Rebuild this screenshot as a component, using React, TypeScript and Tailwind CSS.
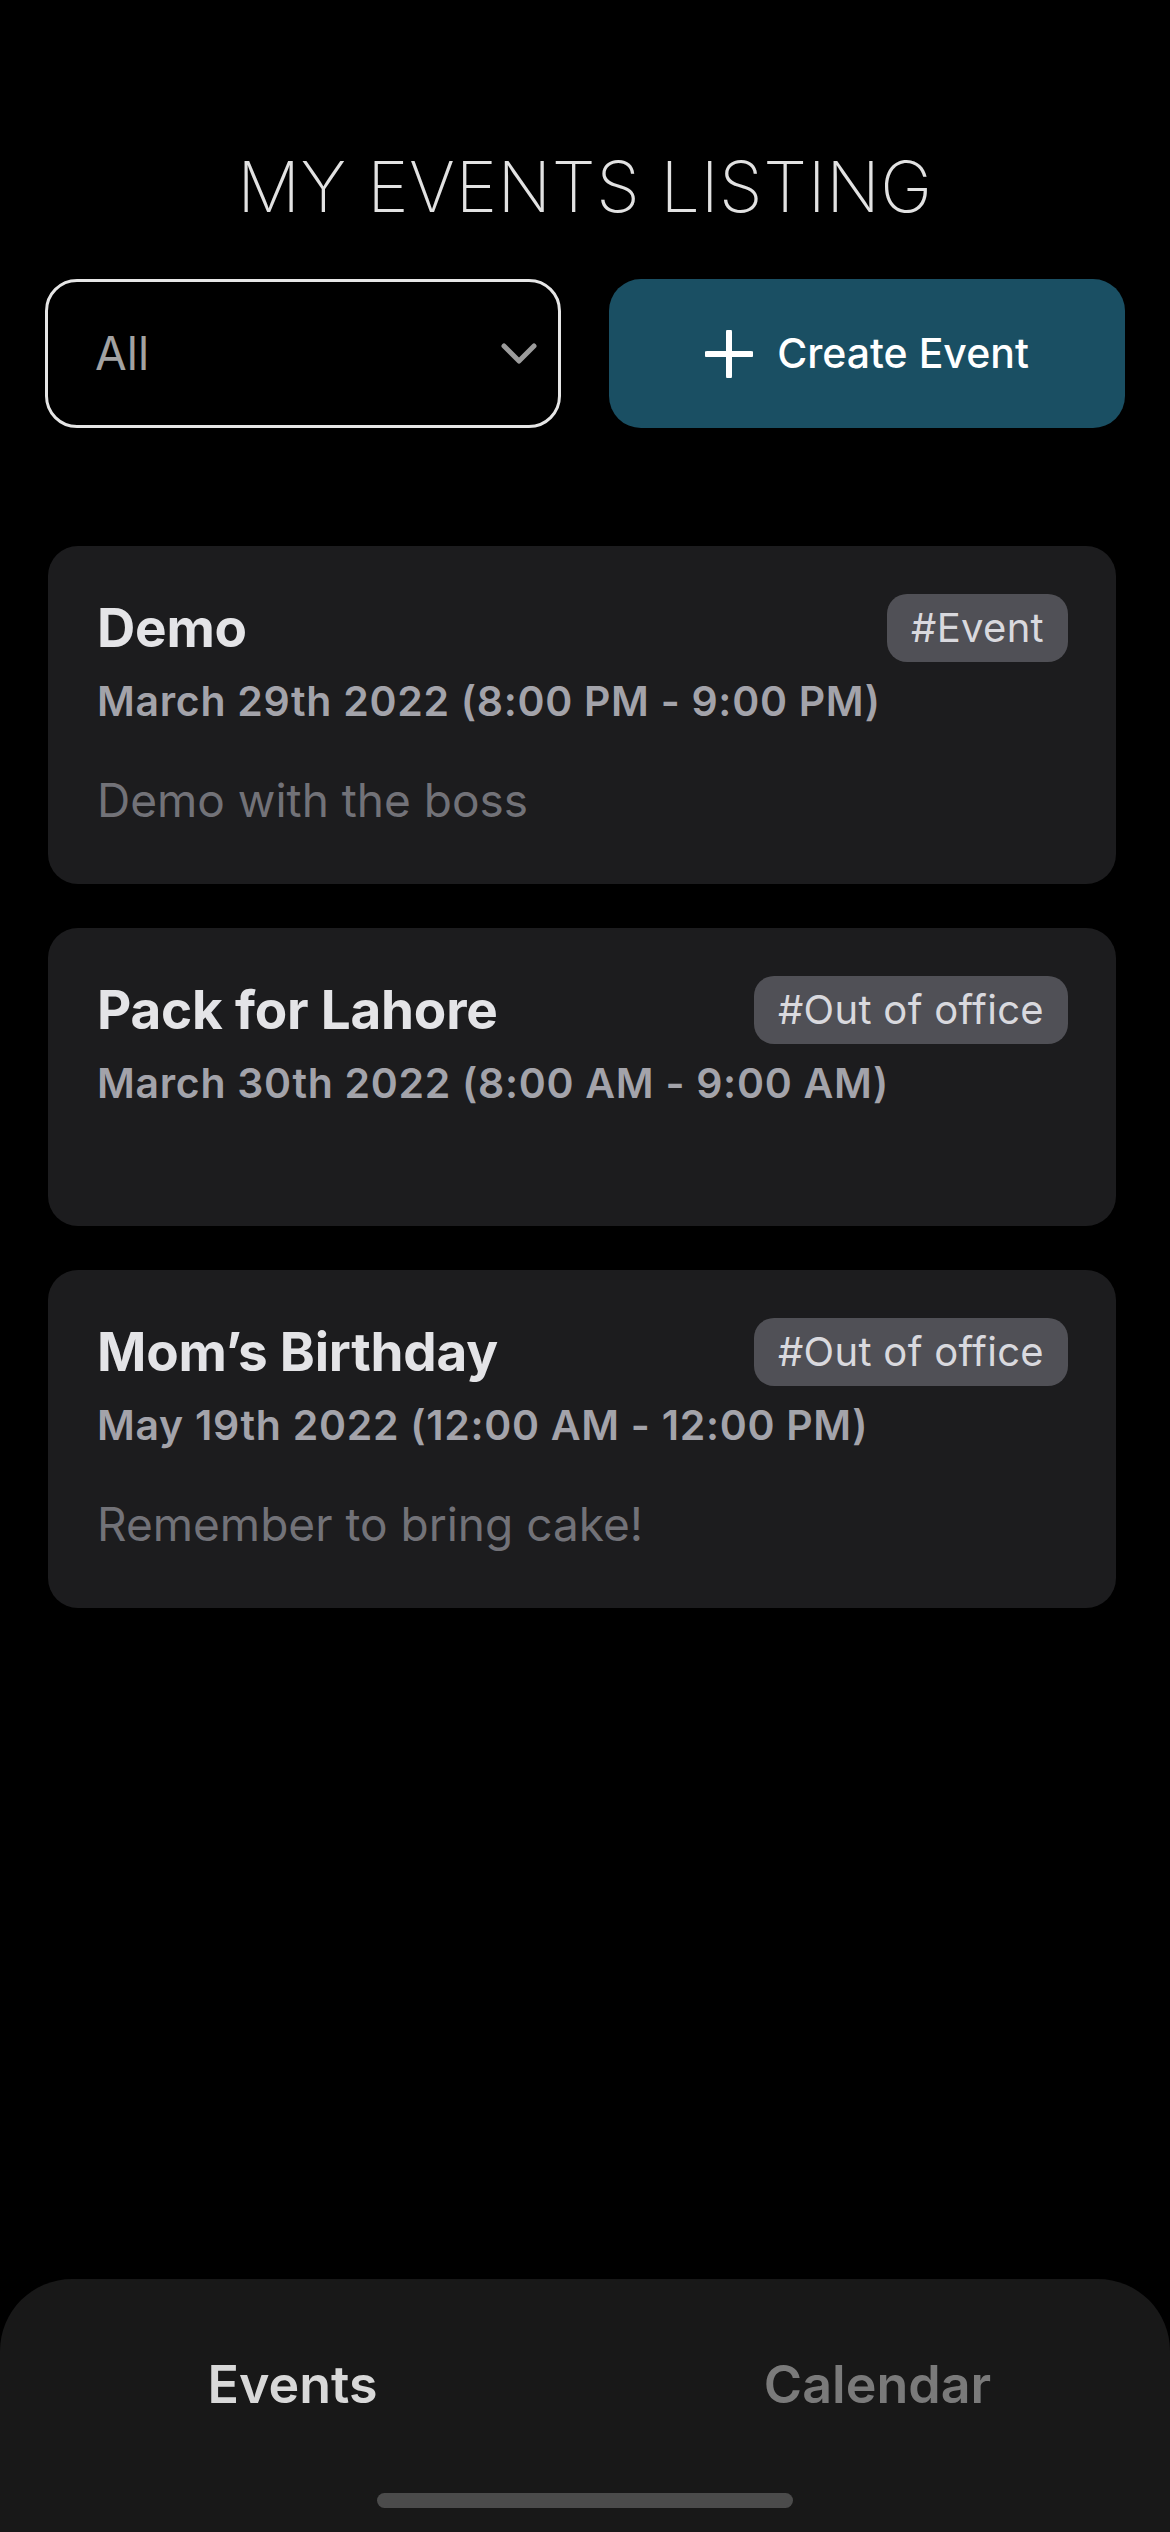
import React from 'react';

interface EventItem {
  title: string;
  date: string;
  tag: string;
  description: string;
}

const events: EventItem[] = [
  { title: 'Demo', date: 'March 29th 2022 (8:00 PM - 9:00 PM)', tag: '#Event', description: 'Demo with the boss' },
  { title: 'Pack for Lahore', date: 'March 30th 2022 (8:00 AM - 9:00 AM)', tag: '#Out of office', description: '' },
  { title: 'Mom’s Birthday', date: 'May 19th 2022 (12:00 AM - 12:00 PM)', tag: '#Out of office', description: 'Remember to bring cake!' },
];

function EventCard({ event }: { event: EventItem }) {
  return (
    <div className="bg-[#1c1c1e] rounded-[30px] pl-[49px] pr-[48px] pt-[48px] pb-[61px]">
      <div className="flex items-center justify-between h-[68px]">
        <h2 className="text-[53px] leading-none font-bold text-[#e4e4e7] tracking-[-0.2px]">{event.title}</h2>
        <span className="h-[68px] flex items-center px-[24px] rounded-[20px] bg-[#505056] text-[40px] leading-none text-[#d9d9de] tracking-[0.3px]">
          {event.tag}
        </span>
      </div>
      <p className="mt-[19px] text-[41px] leading-none font-semibold text-[#a3a3aa] tracking-[0.7px]">{event.date}</p>
      {event.description ? (
        <p className="mt-[55px] text-[46px] leading-none text-[#727278]">{event.description}</p>
      ) : (
        <div className="mt-[56px] h-[5px]" />
      )}
    </div>
  );
}

export default function App() {
  return (
    <div
      className="h-[2532px] bg-black flex flex-col overflow-hidden"
      style={{ fontFamily: 'Inter, "Noto Sans", sans-serif' }}
    >
      <h1 className="pt-[152px] text-center text-[70px] leading-none font-extralight text-[#e2e2e2] tracking-[0.6px]">
        MY EVENTS LISTING
      </h1>

      <div className="mt-[57px] px-[45px] grid grid-cols-2 gap-[48px]">
        <button className="h-[149px] rounded-[32px] border-[3px] border-[#e6e6e6] flex items-center justify-between pl-[47px] pr-[20px]">
          <span className="text-[46px] text-[#a2a2a2]">All</span>
          <svg width="38" height="26" viewBox="0 0 38 26" fill="none">
            <path d="M4 5 L19 20 L34 5" stroke="#9c9c9c" strokeWidth="5" strokeLinecap="round" strokeLinejoin="round" />
          </svg>
        </button>
        <button className="h-[149px] rounded-[32px] bg-[#1a4f63] flex items-center justify-center gap-[24px]">
          <svg width="48" height="48" viewBox="0 0 48 48" fill="none">
            <path d="M24 2 V46 M2 24 H46" stroke="#ffffff" strokeWidth="6" strokeLinecap="round" />
          </svg>
          <span className="text-[41px] font-medium text-white">Create Event</span>
        </button>
      </div>

      <div className="mt-[118px] ml-[48px] mr-[54px] flex flex-col gap-[44px]">
        {events.map((e) => (
          <EventCard key={e.title} event={e} />
        ))}
      </div>

      <nav className="mt-auto h-[253px] bg-[#181818] rounded-t-[72px] flex flex-col items-center">
        <div className="w-full grid grid-cols-2 pt-[80px]">
          <span className="text-center text-[52px] leading-none font-semibold text-[#d8d8d8]">Events</span>
          <span className="text-center text-[52px] leading-none font-semibold text-[#7a7a7a]">Calendar</span>
        </div>
        <div className="mt-[82px] w-[416px] h-[15px] rounded-full bg-[#4b4b4b]" />
      </nav>
    </div>
  );
}
